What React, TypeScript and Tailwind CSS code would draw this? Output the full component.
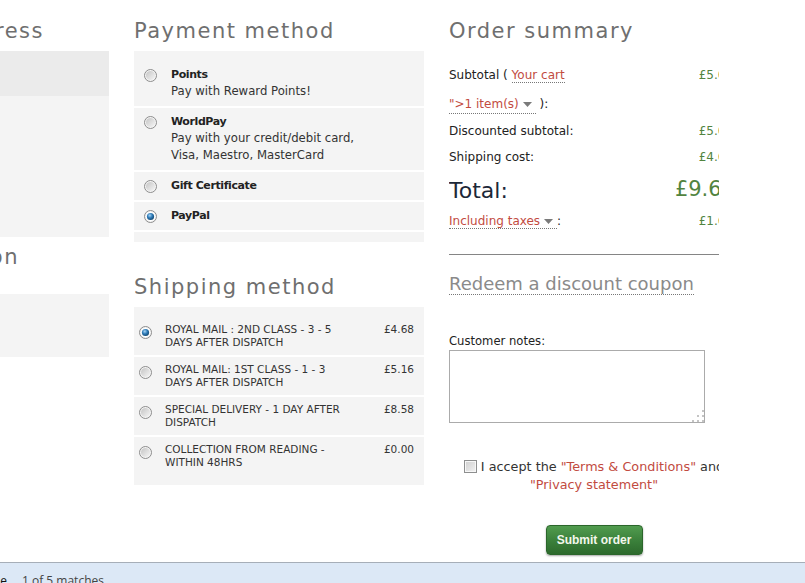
import React from "react";

function Radio({ checked = false, id }: { checked?: boolean; id: string }) {
  return (
    <svg width="13" height="13" viewBox="0 0 13 13" className="block">
      <defs>
        <linearGradient id={`rg-${id}`} x1="0" y1="0" x2="1" y2="1">
          <stop offset="0" stopColor="#c4c4c4" />
          <stop offset="1" stopColor="#f6f6f6" />
        </linearGradient>
        <radialGradient id={`rb-${id}`} cx="0.4" cy="0.35" r="0.75">
          <stop offset="0" stopColor="#a8d4f4" />
          <stop offset="0.45" stopColor="#2f7cb9" />
          <stop offset="1" stopColor="#0c3a5e" />
        </radialGradient>
      </defs>
      <circle cx="6.5" cy="6.5" r="6" fill="#f4f4f4" stroke="#8d8d8d" strokeWidth="1" />
      <circle cx="6.5" cy="6.5" r="4.6" fill={checked ? "#ffffff" : `url(#rg-${id})`} />
      {checked && <circle cx="6.5" cy="6.5" r="3.6" fill={`url(#rb-${id})`} />}
    </svg>
  );
}

function Arrow() {
  return (
    <svg width="9" height="5" viewBox="0 0 9 5" className="inline-block align-middle mx-[4px]">
      <polygon points="0,0 9,0 4.5,5" fill="#7a7a7a" />
    </svg>
  );
}

const payments = [
  { id: "p1", title: "Points", desc: ["Pay with Reward Points!"], checked: false },
  {
    id: "p2",
    title: "WorldPay",
    desc: ["Pay with your credit/debit card,", "Visa, Maestro, MasterCard"],
    checked: false,
  },
  { id: "p3", title: "Gift Certificate", desc: [], checked: false },
  { id: "p4", title: "PayPal", desc: [], checked: true },
];

const shippings = [
  { id: "s1", l1: "ROYAL MAIL : 2ND CLASS - 3 - 5", l2: "DAYS AFTER DISPATCH", price: "£4.68", checked: true },
  { id: "s2", l1: "ROYAL MAIL: 1ST CLASS - 1 - 3", l2: "DAYS AFTER DISPATCH", price: "£5.16", checked: false },
  { id: "s3", l1: "SPECIAL DELIVERY - 1 DAY AFTER", l2: "DISPATCH", price: "£8.58", checked: false },
  { id: "s4", l1: "COLLECTION FROM READING -", l2: "WITHIN 48HRS", price: "£0.00", checked: false },
];

const heading = "text-[21px] leading-[28px] tracking-[1.5px] text-[#6f6f6f] whitespace-nowrap";

export default function App() {
  return (
    <div className="h-[583px] w-[805px] overflow-hidden bg-white flex flex-col font-['DejaVu_Sans',sans-serif]">
      <div className="h-[562px] shrink-0 flex gap-[25px]">
        {/* Left column (clipped) */}
        <div className="w-[109px] shrink-0 overflow-hidden">
          <div className="w-[290px] ml-[-181px]">
            <div className="h-[51px] pt-[17px]">
              <div className={`w-[225px] flex justify-end ${heading}`}>Billing address</div>
            </div>
            <div className="h-[45px] bg-[#ebebeb]" />
            <div className="h-[141px] bg-[#f4f4f4]" />
            <div className={`mt-[6px] w-[200px] flex justify-end ${heading}`}>Delivery option</div>
            <div className="mt-[23px] h-[63px] bg-[#f4f4f4]" />
          </div>
        </div>

        {/* Middle column */}
        <div className="w-[290px] shrink-0">
          <div className="h-[51px] pt-[17px]">
            <div className={heading}>Payment method</div>
          </div>
          <div className="bg-[#f4f4f4] py-[10px]">
            {payments.map((p) => (
              <div key={p.id} className="flex items-start border-b-2 border-white pl-[10px] py-[6px]">
                <div className="h-[16px] w-[13px] flex items-center shrink-0">
                  <Radio id={p.id} checked={p.checked} />
                </div>
                <div className="ml-[14px]">
                  <div className="text-[11px] font-bold leading-[16px] tracking-[-0.4px] text-[#222]">{p.title}</div>
                  {p.desc.map((d) => (
                    <div key={d} className="text-[11.7px] leading-[17px] text-[#333]">
                      {d}
                    </div>
                  ))}
                </div>
              </div>
            ))}
          </div>

          <div className={`mt-[31px] ${heading}`}>Shipping method</div>
          <div className="mt-[6px] bg-[#f4f4f4] py-[10px]">
            {shippings.map((s, i) => (
              <div
                key={s.id}
                className={
                  i < shippings.length - 1
                    ? "flex items-start pl-[5px] pr-[10px] py-[6px] border-b-2 border-white"
                    : "flex items-start pl-[5px] pr-[10px] py-[6px]"
                }
              >
                <div className="pt-[2.5px] shrink-0">
                  <Radio id={s.id} checked={s.checked} />
                </div>
                <div className="ml-[13px] flex-1 text-[10.5px] leading-[13px] text-[#333] whitespace-nowrap">
                  <div>{s.l1}</div>
                  <div>{s.l2}</div>
                </div>
                <div className="text-[10.5px] leading-[13px] text-[#333]">{s.price}</div>
              </div>
            ))}
          </div>
        </div>

        {/* Right column (clipped) */}
        <div className="w-[270px] shrink-0 overflow-hidden">
          <div className="w-[290px] text-[12px] text-[#222]">
            <div className="h-[51px] pt-[17px]">
              <div className={heading}>Order summary</div>
            </div>
            <div className="mt-[11px] h-[26px] flex items-center justify-between pr-[6px] whitespace-nowrap">
              <div>
                Subtotal ({" "}
                <span className="text-[#c24b3f] border-b border-dotted border-[#777]">Your cart</span>
              </div>
              <div className="text-[#52843f]">£5.00</div>
            </div>
            <div className="h-[32px] flex items-center whitespace-nowrap">
              <span className="text-[#c24b3f] border-b border-dotted border-[#777]">
                "&gt;1 item(s)
                <Arrow />
              </span>
              <span>&nbsp;):</span>
            </div>
            <div className="h-[22px] flex items-center justify-between pr-[6px]">
              <div>Discounted subtotal:</div>
              <div className="text-[#52843f]">£5.00</div>
            </div>
            <div className="h-[30px] flex items-center justify-between pr-[6px]">
              <div>Shipping cost:</div>
              <div className="text-[#52843f]">£4.68</div>
            </div>
            <div className="h-[36px] flex items-center justify-between pr-[4px] text-[21px]">
              <div className="text-[#1c2838] text-[22px]">Total:</div>
              <div className="text-[#52843f]">£9.68</div>
            </div>
            <div className="h-[26px] flex items-center justify-between pr-[6px] whitespace-nowrap">
              <div>
                <span className="text-[#c24b3f] border-b border-dotted border-[#777]">
                  Including taxes
                  <Arrow />
                </span>
                <span>:</span>
              </div>
              <div className="text-[#52843f]">£1.61</div>
            </div>
            <div className="mt-[20px] h-[1px] bg-[#858585]" />
            <div className="mt-[17px] text-[18px] leading-[24px] text-[#8a8a8a] whitespace-nowrap">
              <span className="border-b border-dotted border-[#777]">Redeem a discount coupon</span>
            </div>
            <div className="mt-[37px] text-[11.6px] leading-[16px] text-[#222]">Customer notes:</div>
            <div className="mt-[1px] relative w-[256px] h-[73px]">
              <textarea className="block w-[256px] h-[73px] border border-[#ababab] bg-white resize-none outline-none" />
              <svg width="12" height="12" viewBox="0 0 12 12" className="absolute right-[1px] bottom-[1px]">
                <rect x="10" y="0" width="2" height="2" fill="#c4c4c4" />
                <rect x="5" y="5" width="2" height="2" fill="#c4c4c4" />
                <rect x="10" y="5" width="2" height="2" fill="#c4c4c4" />
                <rect x="0" y="10" width="2" height="2" fill="#c4c4c4" />
                <rect x="5" y="10" width="2" height="2" fill="#c4c4c4" />
                <rect x="10" y="10" width="2" height="2" fill="#c4c4c4" />
              </svg>
            </div>
            <div className="mt-[35px] text-center text-[12.8px] leading-[17.5px] text-[#333] whitespace-nowrap">
              <span className="inline-block align-[-2px] mr-[4px] w-[13px] h-[13px] border border-[#8e8f8f] bg-[linear-gradient(135deg,#cfcfcf,#f2f2f2)] shadow-[inset_0_0_0_1px_#f7f7f7]" />
              I accept the <span className="text-[#c24b3f]">"Terms &amp; Conditions"</span> and
              <br />
              <span className="text-[#c24b3f]">"Privacy statement"</span>
            </div>
            <div className="mt-[32px] flex justify-center">
              <button className="w-[97px] h-[30px] rounded-[4px] border border-[#2b662b] bg-[linear-gradient(#519c4f,#3a7f3a_55%,#2d6a2d)] shadow-[0_1px_2px_rgba(0,0,0,0.35)] text-[12px] font-bold text-[#f3f7ec] font-['Liberation_Sans',Arial,sans-serif]">
                Submit order
              </button>
            </div>
          </div>
        </div>
      </div>

      {/* Bottom find bar */}
      <div className="flex-1 border-t border-[#a6aeb8] bg-[#dce8f6] flex items-start pt-[10px] text-[12px] leading-[16px] font-['Open_Sans',sans-serif]">
        <div className="w-[7px] flex justify-end whitespace-nowrap text-[#111]">Match case</div>
        <div className="ml-[15px] text-[#444] whitespace-nowrap">1 of 5 matches</div>
      </div>
    </div>
  );
}
